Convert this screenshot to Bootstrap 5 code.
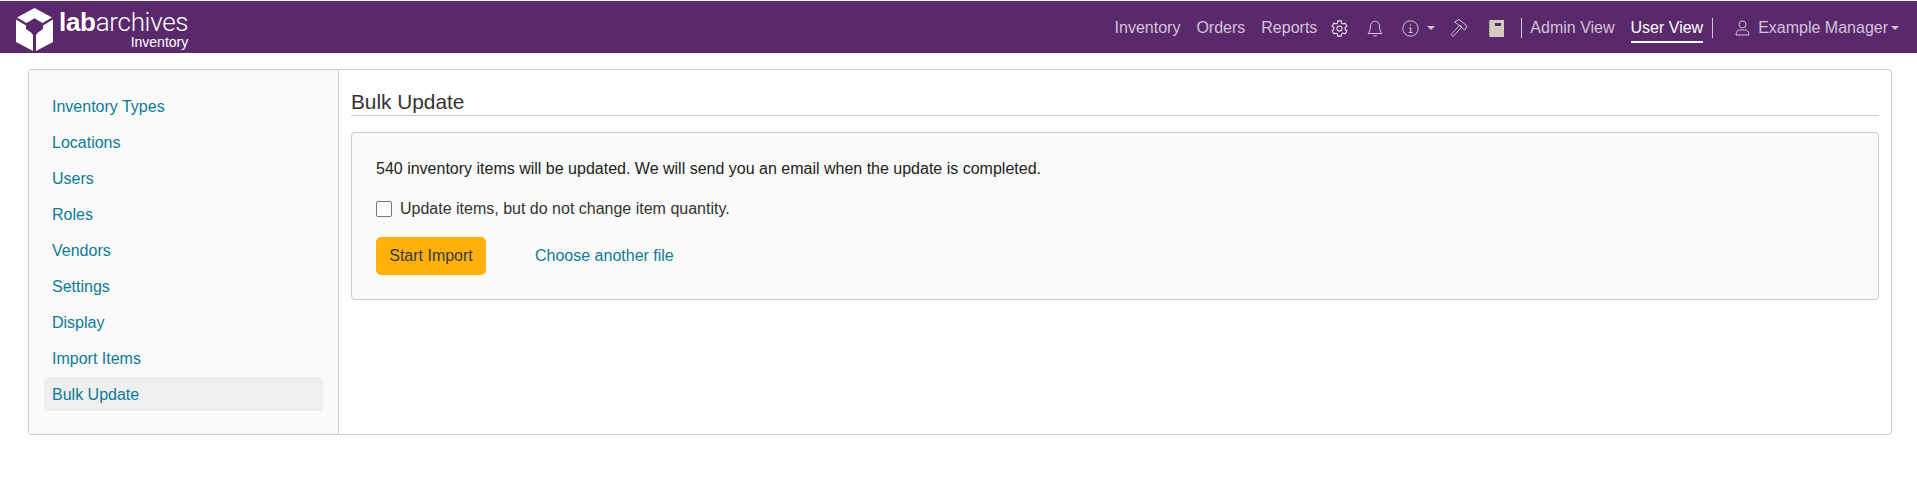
<!doctype html>
<html lang="en"><head><meta charset="utf-8"><title>Bulk Update</title>
<link href="https://cdn.jsdelivr.net/npm/bootstrap@5.3.0/dist/css/bootstrap.min.css" rel="stylesheet">
<style>
html,body{height:100%}
body{font-family:"Liberation Sans",Arial,sans-serif;font-size:16px;color:#333;background:#fff;overflow:hidden}
.topbar{background:#5a296b;height:52px;margin-top:1px;padding:0 18px 0 16px;border-top:0;flex-wrap:nowrap}
.brandbox{display:flex;align-items:flex-start;gap:6px;color:#fff;text-decoration:none}
.brandtext{display:flex;flex-direction:column;align-items:flex-end;line-height:1}
.brandname{font-size:26px;letter-spacing:-.3px;margin-top:7px;line-height:24px}
.brandname b{font-weight:700}
.brandname span{font-family:Roboto,"Liberation Sans",sans-serif;font-weight:300}
.brandsub{font-size:14px;font-weight:400;line-height:14px;margin-top:1px}
.toplinks{display:flex;align-items:center;height:100%;padding-top:2px}
.toplink{color:#d5c3dc;text-decoration:none;font-size:16px;white-space:nowrap}
.ico{display:block;color:#d5c3dc}
.ico.bright{color:#efe8f2}
.navcaret{display:inline-block;width:0;height:0;border-left:4px solid transparent;border-right:4px solid transparent;border-top:4px solid #d5c3dc;margin-left:8px}
.vsep{width:1px;height:20px;background:#d5c3dc}
.toplink.on{color:#fff;border-bottom:2px solid #fff;padding-bottom:1px;margin-top:3px}
.shell{margin:16px 25px 0 28px;height:366px;border:1px solid #ccc;border-radius:4px;overflow:hidden}
.sidepane{width:310px;flex:0 0 310px;background:#fafafa;border-right:1px solid #ccc;padding:19px 15px 0}
.sidelink{display:block;height:34px;line-height:35px;padding:0 8px;margin-bottom:2px;color:#0e7a96;text-decoration:none;border-radius:4px}
.sidelink.on{background:#efefef}
.mainpane{padding:20px 12px 0 12px}
.pagehead{font-size:20.8px;font-weight:400;line-height:24px;margin:0;padding-bottom:1px;border-bottom:1px solid #ccc;color:#333}
.infobox{margin-top:16px;background:#fafafa;border:1px solid #ccc;border-radius:4px;padding:25px 25px 25px 24px;height:168px}
.infobox p{margin:0;line-height:21px;color:#222}
.chkrow{display:flex;align-items:center;margin-top:19px;line-height:21px;color:#333}
.chkrow input{width:16px;height:16px;margin:0 8px 0 0;border:1.5px solid #767676;border-radius:2px;appearance:none;background:#fff}
.actrow{display:flex;align-items:center;margin-top:18px}
.startbtn{background:#ffb10a;border:0;color:#3a3a3a;font-size:16px;height:38px;width:110px;padding:0;border-radius:5px}
.altlink{margin-left:49px;color:#0e7a96;text-decoration:none}
</style></head><body>
<nav class="navbar topbar d-flex justify-content-between">
<a class="brandbox" href="#">
<svg width="37" height="43" viewBox="0 0 37 43" style="margin-top:5px" aria-hidden="true"><path fill="#fff" d="M18.5 0 36 9.500 26.500 15l-3.500-2-4.500-2.800L14 13l-3.500 2L1 9.500zM0 11.500l10 6v3.500l5 3.500 2 2.500v16L0 34zM37 11.500V34l-17 9V27l2-2.500 5-3.500v-3.500z"/></svg>
<span class="brandtext"><span class="brandname"><b>lab</b><span>archives</span></span><span class="brandsub">Inventory</span></span>
</a>
<div class="toplinks">
<a class="toplink" href="#">Inventory</a>
<a class="toplink ms-3" href="#">Orders</a>
<a class="toplink ms-3" href="#">Reports</a>
<svg class="ico bright" style="margin-left:14px" width="17" height="17" viewBox="0 0 16 16" fill="none" stroke="currentColor" stroke-width="1" aria-hidden="true"><path d="M6.400.8h3.200l.4 2.100 1.300.8 2-.7 1.600 2.700-1.600 1.400v1.800l1.600 1.400-1.600 2.700-2-.7-1.300.8-.4 2.100H6.400L6 13.100l-1.300-.8-2 .7-1.600-2.700 1.600-1.400V7.100L1.100 5.700l1.600-2.700 2 .7L6 2.900z"/><circle cx="8" cy="8" r="2.400"/></svg>
<svg class="ico" style="margin-left:19px" width="16" height="17" viewBox="0 0 16 17" fill="none" stroke="currentColor" stroke-width="1" aria-hidden="true"><path d="M1 13.500h14c-1.500-1.500-2.300-3-2.300-6.500 0-3.500-2-5.800-4.700-5.800S3.300 3.500 3.300 7C3.300 10.500 2.500 12 1 13.500zM6.300 15.800h3.400"/></svg>
<svg class="ico" style="margin-left:19px" width="17" height="17" viewBox="0 0 17 17" fill="none" stroke="currentColor" aria-hidden="true"><circle cx="8.500" cy="8.500" r="7.700"/><path d="M8.500 4.500v1.300M7 8h1.700v4.300M6.800 12.500h3.600" stroke-width="1.100"/></svg>
<span class="navcaret"></span>
<svg class="ico" style="margin-left:15px" width="20" height="20" viewBox="0 0 20 20" fill="none" stroke="currentColor" aria-hidden="true"><path d="M1 16.500 3 18.500 12 9 10 7zM4.500 4 9 1.500l8 6.500-2.300 4L9.500 7.500l-1.500-1z"/></svg>
<svg class="ico" style="margin-left:19px" width="15" height="17" viewBox="0 0 15 17" aria-hidden="true"><path fill="#d3cbbb" d="M0 0h15v17H0z"/><path fill="#5a296b" d="M6 3h6v3H6z"/><path stroke="#8f8576" stroke-dasharray="1 1" d="M.5 0v17"/></svg>
<span class="vsep" style="margin:0 8px 0 17px"></span>
<a class="toplink" href="#">Admin View</a>
<a class="toplink on ms-3" href="#">User View</a>
<span class="vsep" style="margin:0 22px 0 9px"></span>
<svg class="ico" width="15" height="16" viewBox="0 0 15 16" fill="none" stroke="currentColor" aria-hidden="true"><circle cx="7.500" cy="4.500" r="3.500"/><path d="M1 15c0-3.500 2-5 3.500-5h6c1.500 0 3.500 1.500 3.500 5z"/></svg>
<a class="toplink" style="margin-left:8px" href="#">Example Manager</a><span class="navcaret" style="margin-left:3px"></span>
</div>
</nav>
<div class="shell d-flex">
<aside class="sidepane">
<a class="sidelink" href="#">Inventory Types</a>
<a class="sidelink" href="#">Locations</a>
<a class="sidelink" href="#">Users</a>
<a class="sidelink" href="#">Roles</a>
<a class="sidelink" href="#">Vendors</a>
<a class="sidelink" href="#">Settings</a>
<a class="sidelink" href="#">Display</a>
<a class="sidelink" href="#">Import Items</a>
<a class="sidelink on" href="#">Bulk Update</a>
</aside>
<main class="mainpane flex-grow-1">
<h1 class="pagehead">Bulk Update</h1>
<div class="infobox">
<p>540 inventory items will be updated. We will send you an email when the update is completed.</p>
<label class="chkrow"><input type="checkbox">Update items, but do not change item quantity.</label>
<div class="actrow"><button class="startbtn" type="button">Start Import</button><a class="altlink" href="#">Choose another file</a></div>
</div>
</main>
</div>
</body></html>
